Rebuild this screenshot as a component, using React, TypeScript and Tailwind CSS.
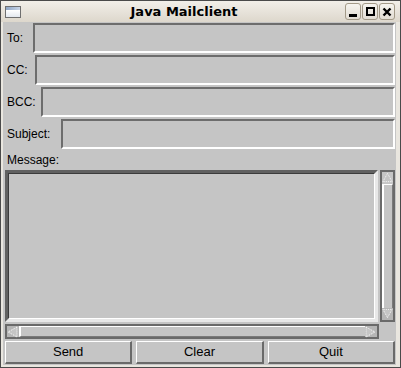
import React from 'react';

const font = { fontFamily: "'Liberation Sans', Arial, sans-serif" };

function Field({ label, labelWidth }: { label: string; labelWidth: string }) {
  return (
    <div className="flex h-[30px] items-stretch">
      <div className={`${labelWidth} shrink-0 flex items-center text-[12px] text-black`}>{label}</div>
      <div className="flex-1 border-2 border-t-[#6d6d6d] border-l-[#6d6d6d] border-b-white border-r-white bg-[#c5c5c5]" />
    </div>
  );
}

function TitleButton({ children }: { children: React.ReactNode }) {
  return (
    <div className="w-[16px] h-[17px] rounded-[3px] border border-[#a39a88] bg-gradient-to-b from-[#f6f4ef] to-[#e2ddd3] flex items-center justify-center">
      {children}
    </div>
  );
}

function Arrow({ dir }: { dir: 'up' | 'down' | 'left' | 'right' }) {
  const pts = {
    up: '1,10 6,1 11,10',
    down: '1,1 6,10 11,1',
    left: '10,1 1,6 10,11',
    right: '1,1 10,6 1,11',
  }[dir];
  return (
    <svg width="12" height="12" viewBox="0 0 12 12">
      <polygon points={pts} fill="#c5c5c5" stroke="#ffffff" strokeWidth="1" strokeDasharray="1 1" />
    </svg>
  );
}

export default function App() {
  return (
    <div className="w-[401px] h-[368px] flex flex-col bg-[#e9e6df] border border-[#4a4a4a] overflow-hidden" style={font}>
      {/* Title bar */}
      <div className="h-[21px] shrink-0 relative flex items-center bg-gradient-to-b from-[#f2efe9] to-[#ddd7cc]">
        <div className="ml-[4px] w-[16px] h-[12px] border border-[#6f6f6f] bg-white flex flex-col">
          <div className="h-[3px] bg-gradient-to-r from-[#8fa6c6] to-[#c9d5e6]" />
          <div className="flex-1 bg-gradient-to-b from-[#ffffff] to-[#e3e8ef]" />
        </div>
        <div className="flex-1 pl-[2px] text-center text-[13px] font-bold text-black" style={{ fontFamily: "'DejaVu Sans', sans-serif" }}>
          Java Mailclient
        </div>
        <div className="flex gap-[1px] mr-[5px]">
          <TitleButton>
            <div className="w-[8px] h-[3px] bg-black mt-[7px]" />
          </TitleButton>
          <TitleButton>
            <div className="w-[9px] h-[9px] border-2 border-black" />
          </TitleButton>
          <TitleButton>
            <svg width="10" height="10" viewBox="0 0 10 10">
              <path d="M1.5 1.5 L8.5 8.5 M8.5 1.5 L1.5 8.5" stroke="black" strokeWidth="2.4" />
            </svg>
          </TitleButton>
        </div>
      </div>

      {/* Content */}
      <div className="flex-1 mx-[2px] mr-[4px] mb-[3px] bg-[#c5c5c5] flex flex-col pt-[1px] pb-[2px] pl-[2px] pr-[1px]">
        <div className="flex flex-col gap-[2px] pl-[2px]">
          <Field label="To:" labelWidth="w-[26px]" />
          <Field label="CC:" labelWidth="w-[28px]" />
          <Field label="BCC:" labelWidth="w-[34px]" />
          <Field label="Subject:" labelWidth="w-[54px]" />
        </div>
        <div className="h-[21px] flex items-center pl-[2px] text-[12px] text-black">Message:</div>

        {/* Text area + vertical scrollbar */}
        <div className="h-[152px] flex gap-[2px]">
          <div className="flex-1 border-[3px] border-t-[#616161] border-l-[#616161] border-b-[#e8e8e8] border-r-[#e8e8e8]">
            <div className="w-full h-full border border-t-[#3c3c3c] border-l-[#3c3c3c] border-b-white border-r-white bg-[#c5c5c5]" />
          </div>
          <div className="w-[15px] border-2 border-[#6a6a6a] flex flex-col">
            <div className="h-[12px] flex items-center justify-center bg-[#c5c5c5]">
              <Arrow dir="up" />
            </div>
            <div className="flex-1 border-l-2 border-t border-l-white border-t-white border-r border-r-[#7a7a7a] bg-[#c5c5c5]" />
            <div className="h-[12px] flex items-center justify-center bg-[#b5b5b5]">
              <Arrow dir="down" />
            </div>
          </div>
        </div>

        {/* Horizontal scrollbar */}
        <div className="mt-[2px] h-[15px] w-[374px] border-2 border-[#6a6a6a] flex">
          <div className="w-[12px] flex items-center justify-center bg-[#b5b5b5]">
            <Arrow dir="left" />
          </div>
          <div className="flex-1 border-l-2 border-t border-l-white border-t-white border-b border-b-[#7a7a7a] bg-[#c5c5c5]" />
          <div className="w-[12px] flex items-center justify-center bg-[#b5b5b5]">
            <Arrow dir="right" />
          </div>
        </div>

        {/* Buttons */}
        <div className="mt-[2px] h-[22px] grid grid-cols-3 gap-[4px]">
          {['Send', 'Clear', 'Quit'].map((b) => (
            <div
              key={b}
              className="flex items-center justify-center text-[13px] text-black border border-t-white border-l-white border-b-2 border-r-2 border-b-[#6a6a6a] border-r-[#6a6a6a] bg-[#c5c5c5]"
            >
              {b}
            </div>
          ))}
        </div>
      </div>
    </div>
  );
}
